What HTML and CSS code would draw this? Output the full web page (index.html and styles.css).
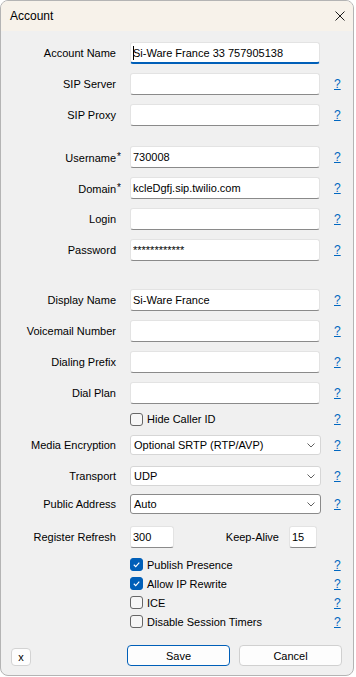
FILE: index.html
```html
<!DOCTYPE html>
<html lang="en">
<head>
    <meta charset="UTF-8">
    <title>Account</title>
    <link rel="stylesheet" href="styles.css">
</head>
<body>
    <div class="window">
        <div class="titlebar">
            <span class="title">Account</span>
            <svg class="close" viewBox="0 0 10 10"><path d="M0.5 0.5L9.5 9.5M9.5 0.5L0.5 9.5"/></svg>
        </div>

        <form class="content">
            <div class="row">
                <label class="label">Account Name</label>
                <div class="field focused"><input class="text" type="text" value="Si-Ware France 33 757905138"></div>
            </div>
            <div class="row">
                <label class="label">SIP Server</label>
                <input class="text" type="text" value="">
                <a class="help" href="#">?</a>
            </div>
            <div class="row">
                <label class="label">SIP Proxy</label>
                <input class="text" type="text" value="">
                <a class="help" href="#">?</a>
            </div>

            <div class="row section">
                <label class="label">Username<span class="req">*</span></label>
                <input class="text" type="text" value="730008">
                <a class="help" href="#">?</a>
            </div>
            <div class="row">
                <label class="label">Domain<span class="req">*</span></label>
                <input class="text" type="text" value="kcleDgfj.sip.twilio.com">
                <a class="help" href="#">?</a>
            </div>
            <div class="row">
                <label class="label">Login</label>
                <input class="text" type="text" value="">
                <a class="help" href="#">?</a>
            </div>
            <div class="row">
                <label class="label">Password</label>
                <input class="text" type="text" value="************">
                <a class="help" href="#">?</a>
            </div>

            <div class="row section-lg">
                <label class="label">Display Name</label>
                <input class="text" type="text" value="Si-Ware France">
                <a class="help" href="#">?</a>
            </div>
            <div class="row">
                <label class="label">Voicemail Number</label>
                <input class="text" type="text" value="">
                <a class="help" href="#">?</a>
            </div>
            <div class="row">
                <label class="label">Dialing Prefix</label>
                <input class="text" type="text" value="">
                <a class="help" href="#">?</a>
            </div>
            <div class="row">
                <label class="label">Dial Plan</label>
                <input class="text" type="text" value="">
                <a class="help" href="#">?</a>
            </div>
            <div class="row short">
                <span></span>
                <div class="check-item"><span class="check"></span>Hide Caller ID</div>
                <a class="help" href="#">?</a>
            </div>

            <div class="row short-after">
                <label class="label">Media Encryption</label>
                <div class="combo"><span>Optional SRTP (RTP/AVP)</span><svg class="chev" viewBox="0 0 8 5"><path d="M0.5 0.5L4 4L7.5 0.5"/></svg></div>
                <a class="help" href="#">?</a>
            </div>
            <div class="row">
                <label class="label">Transport</label>
                <div class="combo"><span>UDP</span><svg class="chev" viewBox="0 0 8 5"><path d="M0.5 0.5L4 4L7.5 0.5"/></svg></div>
                <a class="help" href="#">?</a>
            </div>
            <div class="row tight">
                <label class="label">Public Address</label>
                <div class="combo hover"><span>Auto</span><svg class="chev" viewBox="0 0 8 5"><path d="M0.5 0.5L4 4L7.5 0.5"/></svg></div>
                <a class="help" href="#">?</a>
            </div>
            <div class="row loose">
                <label class="label">Register Refresh</label>
                <div class="pair">
                    <input class="text small" type="text" value="300">
                    <label class="keep-label">Keep-Alive</label>
                    <input class="text tiny" type="text" value="15">
                </div>
            </div>

            <div class="checks">
                <div class="row check-row">
                    <span></span>
                    <div class="check-item"><span class="check on"><svg viewBox="0 0 13 13"><path d="M3.3 6.8L5.6 9L9.8 4.3"/></svg></span>Publish Presence</div>
                    <a class="help" href="#">?</a>
                </div>
                <div class="row check-row">
                    <span></span>
                    <div class="check-item"><span class="check on"><svg viewBox="0 0 13 13"><path d="M3.3 6.8L5.6 9L9.8 4.3"/></svg></span>Allow IP Rewrite</div>
                    <a class="help" href="#">?</a>
                </div>
                <div class="row check-row">
                    <span></span>
                    <div class="check-item"><span class="check"></span>ICE</div>
                    <a class="help" href="#">?</a>
                </div>
                <div class="row check-row">
                    <span></span>
                    <div class="check-item"><span class="check"></span>Disable Session Timers</div>
                    <a class="help" href="#">?</a>
                </div>
            </div>

            <div class="footer">
                <button type="button" class="mini">x</button>
                <div class="actions">
                    <button type="submit" class="btn primary">Save</button>
                    <button type="button" class="btn">Cancel</button>
                </div>
            </div>
        </form>
    </div>
</body>
</html>
```

FILE: styles.css
```css
* {
    margin: 0;
    padding: 0;
    box-sizing: border-box;
}

body {
    background: #fff;
    font-family: 'Liberation Sans', Arial, sans-serif;
    font-size: 11px;
    color: #000;
}

.window {
    width: 354px;
    height: 676px;
    border: 1px solid #b4b4b4;
    border-radius: 8px;
    background: #f0f0f0;
    display: flex;
    flex-direction: column;
    overflow: hidden;
}

.titlebar {
    height: 30px;
    flex-shrink: 0;
    background: #f7f2ea;
    display: flex;
    align-items: center;
    justify-content: space-between;
    padding: 0 8px 0 9px;
}

.title {
    font-size: 12px;
}

.close {
    width: 10px;
    height: 10px;
    fill: none;
    stroke: #1c1c1c;
    stroke-width: 1;
}

.content {
    padding-top: 11px;
    display: flex;
    flex-direction: column;
}

/* every row: label | field | help link */
.row {
    display: grid;
    grid-template-columns: 115px 190px auto;
    column-gap: 14px;
    align-items: center;
    height: 22px;
    margin-top: 9px;
}

.row:first-child {
    margin-top: 0;
}

.row.section {
    margin-top: 20px;
}

.row.section-lg {
    margin-top: 28px;
}

.row.short {
    height: 14px;
    margin-top: 8px;
}

.row.short-after {
    margin-top: 8px;
}

.row.tight {
    margin-top: 6px;
}

.row.loose {
    margin-top: 11px;
}

.label {
    text-align: right;
    white-space: nowrap;
}

.req {
    font-size: 10px;
    vertical-align: 2px;
    margin-left: 1px;
    margin-right: -5px;
}

.text {
    width: 100%;
    height: 22px;
    border: 1px solid #e3e3e3;
    border-bottom-color: #8a8a8a;
    border-radius: 3px;
    background: #fff;
    font: inherit;
    color: #000;
    padding: 0 2px;
    outline: none;
}

.field {
    position: relative;
}

.field.focused .text {
    border-bottom: 2px solid #005fb8;
}

.field.focused::after {
    content: '';
    position: absolute;
    left: 3px;
    top: 4px;
    width: 1px;
    height: 14px;
    background: #000;
}

.help {
    color: #0067c0;
    text-decoration: underline;
    font-size: 12px;
}

.combo {
    height: 20px;
    width: 191px;
    border: 1px solid #d6d6d6;
    border-radius: 3px;
    background: #fff;
    display: flex;
    align-items: center;
    justify-content: space-between;
    padding: 0 5px 0 3px;
}

.combo.hover {
    border-color: #8a8a8a;
}

.chev {
    width: 8px;
    height: 5px;
    fill: none;
    stroke: #606060;
    stroke-width: 1;
}

.pair {
    display: flex;
    align-items: center;
}

.text.small {
    width: 44px;
}

.keep-label {
    width: 105px;
    text-align: right;
    margin-right: 10px;
}

.text.tiny {
    width: 28px;
}

.check-item {
    display: flex;
    align-items: center;
    gap: 4px;
    white-space: nowrap;
}

.check {
    width: 13px;
    height: 13px;
    border: 1px solid #666;
    border-radius: 3px;
    background: #f6f6f6;
    display: flex;
}

.check.on {
    border-color: #005fb8;
    background: #005fb8;
}

.check svg {
    width: 11px;
    height: 11px;
    fill: none;
    stroke: #fff;
    stroke-width: 1.3;
}

.checks {
    margin-top: 7px;
}

.row.check-row {
    height: 19px;
    margin-top: 0;
}

.footer {
    display: flex;
    align-items: flex-end;
    margin-top: 14px;
    padding: 0 11px 0 10px;
}

.mini {
    width: 20px;
    height: 18px;
    border: 1px solid #d3d3d3;
    border-radius: 4px;
    background: #fdfdfd;
    font: inherit;
    font-size: 11px;
}

.actions {
    margin-left: auto;
    display: flex;
    gap: 9px;
}

.btn {
    width: 103px;
    height: 21px;
    border: 1px solid #d0d0d0;
    border-radius: 4px;
    background: #fdfdfd;
    font: inherit;
    font-size: 11px;
    color: #000;
}

.btn.primary {
    border-color: #005fb8;
}
```
